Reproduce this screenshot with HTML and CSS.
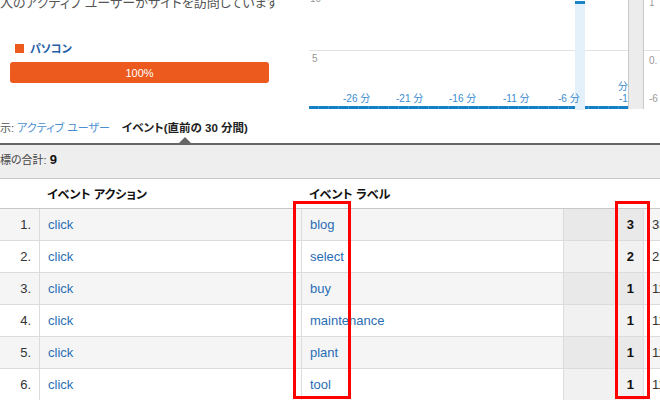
FILE: index.html
```html
<!DOCTYPE html>
<html lang="ja">
<head>
<meta charset="utf-8">
<link rel="stylesheet" href="styles.css">
</head>
<body>
<div class="page">
  <section class="top">
    <div class="summary-panel">
      <p class="headline">人のアクティブ ユーザーがサイトを訪問しています</p>
      <div class="legend"><span class="swatch"></span><span class="legend-label">パソコン</span></div>
      <div class="bar"><span>100%</span></div>
    </div>
    <div class="chart">
      <div class="plot">
        <span class="ylabel y10">10</span>
        <span class="gridline"></span>
        <span class="ylabel y5">5</span>
        <div class="baseline"></div>
        <div class="highlight"></div>
        <span class="xlabel" style="left:43px">-26 分</span>
        <span class="xlabel" style="left:96px">-21 分</span>
        <span class="xlabel" style="left:149px">-16 分</span>
        <span class="xlabel" style="left:203px">-11 分</span>
        <span class="xlabel" style="left:258px">-6 分</span>
        <span class="xlabel xlabel-wrap" style="left:318px">分</span>
        <span class="xlabel" style="left:319px">-1</span>
      </div>
      <div class="strip"></div>
      <div class="side-axis">
        <span class="gridline"></span>
        <span class="side-label s1">1</span>
        <span class="side-label s2">0.</span>
        <span class="side-label s3">-6</span>
      </div>
    </div>
  </section>

  <nav class="tabs">
    <span class="tab tab-link"><span class="tab-prefix">示: </span>アクティブ ユーザー</span>
    <span class="tab tab-active">イベント(直前の 30 分間)</span>
  </nav>

  <div class="totals">標の合計: <b>9</b></div>

  <table class="events">
    <colgroup>
      <col class="c-num"><col class="c-action"><col class="c-label"><col class="c-value"><col class="c-pct">
    </colgroup>
    <thead>
      <tr><th></th><th>イベント アクション</th><th>イベント ラベル</th><th></th><th></th></tr>
    </thead>
    <tbody>
      <tr><td class="num">1.</td><td><a>click</a></td><td><a>blog</a></td><td class="val">3</td><td class="pct">33.33%</td></tr>
      <tr><td class="num">2.</td><td><a>click</a></td><td><a>select</a></td><td class="val">2</td><td class="pct">22.22%</td></tr>
      <tr><td class="num">3.</td><td><a>click</a></td><td><a>buy</a></td><td class="val">1</td><td class="pct">11.11%</td></tr>
      <tr><td class="num">4.</td><td><a>click</a></td><td><a>maintenance</a></td><td class="val">1</td><td class="pct">11.11%</td></tr>
      <tr><td class="num">5.</td><td><a>click</a></td><td><a>plant</a></td><td class="val">1</td><td class="pct">11.11%</td></tr>
      <tr><td class="num">6.</td><td><a>click</a></td><td><a>tool</a></td><td class="val">1</td><td class="pct">11.11%</td></tr>
    </tbody>
  </table>

  <div class="mark mark-label"></div>
  <div class="mark mark-value"></div>
</div>
</body>
</html>
```

FILE: styles.css
```css
* { box-sizing: border-box; }
html, body { margin: 0; padding: 0; }
body {
  width: 660px;
  height: 400px;
  overflow: hidden;
  background: #fff;
  font-family: "Liberation Sans", "Noto Sans CJK JP", sans-serif;
  font-feature-settings: "palt" 1;
  color: #222;
}
.page { position: relative; width: 660px; height: 400px; overflow: hidden; }

/* top summary */
.top { display: flex; height: 110px; }
.summary-panel { width: 300px; flex: none; }
.headline {
  margin: -6px 0 0 0;
  font-size: 13px;
  line-height: 18px;
  color: #555;
  white-space: nowrap;
}
.legend {
  display: flex;
  align-items: center;
  gap: 6px;
  height: 14px;
  margin: 29px 0 0 15px;
}
.swatch { width: 9px; height: 9px; background: #ec5a1d; flex: none; }
.legend-label { font-size: 11px; font-weight: bold; color: #1f5ea8; }
.bar {
  margin: 7px 0 0 10px;
  width: 259px;
  height: 21px;
  border-radius: 3px;
  background: #ec5a1d;
  color: #fff;
  font-size: 11px;
  display: flex;
  align-items: center;
  justify-content: center;
}

/* chart */
.chart { flex: 1; display: flex; height: 110px; }
.plot { position: relative; width: 328px; flex: none; height: 110px; }
.gridline {
  position: absolute;
  left: 9px;
  right: 0;
  top: 50px;
  height: 1px;
  background: #e2e2e2;
}
.ylabel {
  position: absolute;
  font-size: 10px;
  line-height: 12px;
  color: #999;
}
.y10 { left: 10px; top: -7px; }
.y5 { left: 12px; top: 53px; }
.baseline {
  position: absolute;
  left: 9px;
  width: 319px;
  top: 106px;
  height: 3px;
  background: repeating-linear-gradient(90deg, #1380c6 0 9px, #3b97d3 9px 10px);
}
.highlight {
  position: absolute;
  left: 275px;
  width: 10px;
  top: 1px;
  height: 109px;
  background: #e4f1fa;
  border-top: 3px solid #1a86c8;
}
.xlabel {
  position: absolute;
  top: 93px;
  font-size: 10px;
  line-height: 12px;
  color: #3a8bd0;
  white-space: nowrap;
}
.xlabel-wrap { top: 81px; }
.strip {
  width: 16px;
  flex: none;
  height: 109px;
  background: #ececec;
  border-left: 1px solid #c8c8c8;
  border-right: 1px solid #c8c8c8;
}
.side-axis { position: relative; flex: 1; height: 110px; }
.side-axis .gridline { left: 0; }
.side-label {
  position: absolute;
  left: 5px;
  font-size: 10px;
  line-height: 12px;
  color: #999;
}
.s1 { top: -3px; }
.s2 { top: 55px; }
.s3 { top: 93px; }

/* tabs */
.tabs {
  display: flex;
  height: 35px;
  border-bottom: 2px solid #666;
  font-size: 11px;
}
.tab { display: flex; align-items: center; white-space: nowrap; }
.tab-link { color: #4a8fd0; }
.tab-prefix { color: #555; white-space: pre; }
.tab-active {
  position: relative;
  margin-left: 12px;
  font-weight: bold;
  color: #222;
  font-size: 11.5px;
}
.tab-active::after {
  content: "";
  position: absolute;
  left: 50%;
  bottom: 0;
  margin-left: -6px;
  border-left: 6px solid transparent;
  border-right: 6px solid transparent;
  border-bottom: 6px solid #666;
}

/* totals */
.totals {
  height: 34px;
  background: #eee;
  border-bottom: 1px solid #c8c8c8;
  display: flex;
  align-items: center;
  padding-bottom: 5px;
  font-size: 11px;
  color: #444;
  white-space: pre;
}
.totals b { color: #111; font-size: 13px; }

/* table */
.events {
  table-layout: fixed;
  width: 764px;
  border-collapse: separate;
  border-spacing: 0;
  font-size: 13px;
}
.c-num { width: 40px; }
.c-action { width: 262px; }
.c-label { width: 262px; }
.c-value { width: 80px; }
.c-pct { width: 120px; }
.events th {
  height: 30px;
  border-bottom: 1px solid #c8c8c8;
  text-align: left;
  font-size: 12px;
  font-weight: bold;
  color: #111;
  padding: 0 0 0 7px;
  white-space: nowrap;
}
.events td {
  height: 32px;
  padding: 0 8px;
  border-bottom: 1px solid #dcdcdc;
  border-right: 1px solid #dcdcdc;
  white-space: nowrap;
  overflow: hidden;
}
.events tbody tr:nth-child(odd) td { background: #f5f5f5; }
.events tbody tr:nth-child(odd) td.val { background: #e9e9e9; }
.events tbody tr:nth-child(even) td.val { background: #f1f1f1; }
.events a { color: #2a6db5; }
.events td.num { text-align: right; color: #333; }
.events td.val { text-align: right; font-weight: bold; color: #111; padding-right: 9px; }
.events td.pct { color: #333; }

/* annotation boxes */
.mark {
  position: absolute;
  top: 201px;
  height: 198px;
  border: 3px solid #f00;
}
.mark-label { left: 293px; width: 58px; }
.mark-value { left: 615px; width: 35px; }
```
